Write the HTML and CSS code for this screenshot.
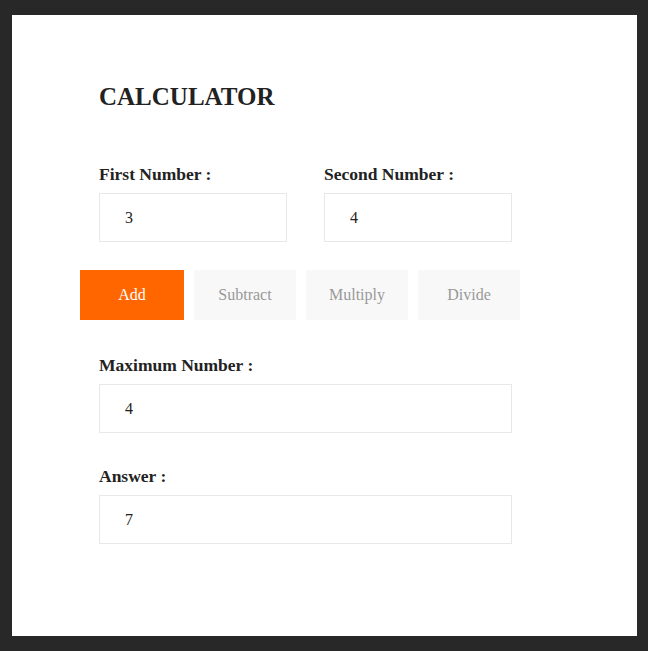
FILE: index.html
```html
<!DOCTYPE html>
<html>
<head>
<meta charset="utf-8">
<title>Calculator</title>
<link rel="stylesheet" href="styles.css">
</head>
<body>
<div class="panel">
  <h1 class="title">CALCULATOR</h1>
  <div class="pair">
    <div class="field">
      <label class="label">First Number :</label>
      <div class="input half">3</div>
    </div>
    <div class="field">
      <label class="label">Second Number :</label>
      <div class="input half">4</div>
    </div>
  </div>
  <div class="ops">
    <button class="btn active">Add</button>
    <button class="btn">Subtract</button>
    <button class="btn">Multiply</button>
    <button class="btn">Divide</button>
  </div>
  <div class="field block">
    <label class="label">Maximum Number :</label>
    <div class="input full">4</div>
  </div>
  <div class="field block">
    <label class="label">Answer :</label>
    <div class="input full">7</div>
  </div>
</div>
</body>
</html>
```
FILE: styles.css
```css
html, body {
  margin: 0;
  padding: 0;
}
body {
  background: #282828;
  padding: 15px 11px 15px 12px;
  font-family: "Liberation Serif", "Times New Roman", serif;
  color: #222;
}
.panel {
  background: #fff;
  height: 621px;
  box-sizing: border-box;
  padding: 67px 0 0 87px;
}
.title {
  margin: 0;
  font-size: 25px;
  line-height: 30px;
  font-weight: bold;
  color: #222;
}
.pair {
  display: flex;
  gap: 37px;
  margin-top: 52px;
}
.label {
  display: block;
  font-weight: bold;
  font-size: 17.5px;
  line-height: 20px;
  margin-bottom: 9px;
  color: #222;
}
.input {
  box-sizing: border-box;
  height: 49px;
  border: 1px solid #e8e8e8;
  padding-left: 25px;
  font-size: 16px;
  line-height: 47px;
  color: #222;
}
.half { width: 188px; }
.full { width: 413px; }
.ops {
  display: flex;
  gap: 10px;
  margin: 28px 0 35px -19px;
}
.btn {
  width: 102px;
  height: 50px;
  border: none;
  background: #f8f8f8;
  color: #999;
  font-family: "Liberation Serif", "Times New Roman", serif;
  font-size: 16px;
  padding: 0;
}
.btn.active {
  width: 104px;
  background: #ff6600;
  color: #fff;
}
.block {
  margin-bottom: 33px;
}
```
